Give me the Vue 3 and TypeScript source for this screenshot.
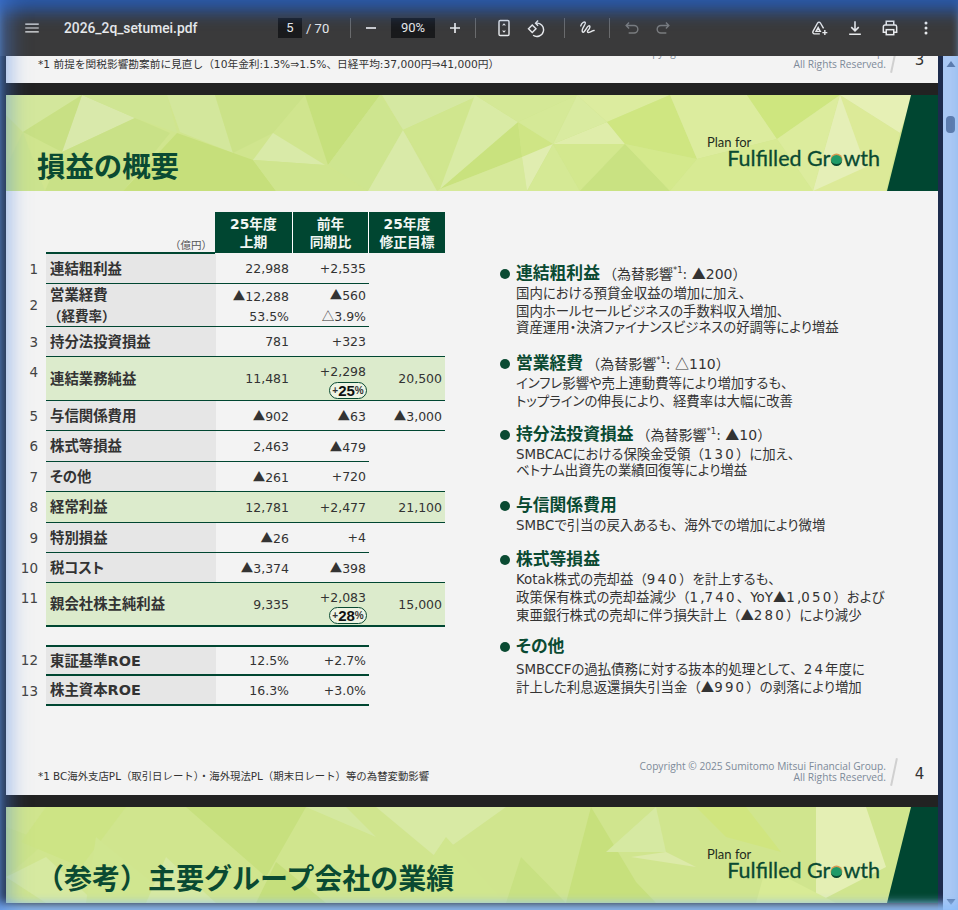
<template>
  <div class="viewer">
    <header class="toolbar">
      <div class="tb-left">
        <svg class="ic menu" viewBox="0 0 24 24"><path d="M3 6h18v1.6H3zM3 11.200h18v1.600H3zM3 16.400h18V18H3z" fill="#e8eaed" /></svg>
        <span class="filename">2026_2q_setumei.pdf</span>
      </div>
      <div class="tb-center">
        <span class="pagebox">5</span>
        <span class="pagetotal">/ 70</span>
        <i class="sep sep-a"></i>
        <svg class="ic" viewBox="0 0 24 24"><path d="M6 11h12v2H6z" fill="#e8eaed" /></svg>
        <span class="zoombox">90%</span>
        <svg class="ic" viewBox="0 0 24 24"><path d="M11 6h2v5h5v2h-5v5h-2v-5H6v-2h5z" fill="#e8eaed" /></svg>
        <i class="sep sep-b"></i>
        <svg class="ic fit" viewBox="0 0 24 24" fill="none" stroke="#e8eaed" stroke-width="1.700"><rect x="6" y="3" width="12" height="18" rx="1.500" /><path d="M12 6.500v.1M10.400 9l1.600-1.800L13.600 9M10.400 15l1.600 1.800 1.600-1.800" stroke-width="1.300" /></svg>
        <svg class="ic rotate" viewBox="0 0 24 24" fill="none" stroke="#e8eaed" stroke-width="1.700"><path d="M7.500 8.500 12 13l-4.500 4.500L3 13z" /><path d="M12 6.200a8 8 0 1 1-3.500 14.500" /><path d="M14.500 3 11.500 6.200l3 3" /></svg>
        <i class="sep"></i>
        <svg class="ic" viewBox="0 0 24 24" fill="none" stroke="#e8eaed" stroke-width="1.700" stroke-linecap="round"><path d="M4.500 9.500c1-3.500 4.500-6 5.500-4s-5.500 8-3.500 11 5-6 7.500-7 1.500 3-.5 5-1 3.500 2 2.500 4-2.500 5-2" /></svg>
        <i class="sep"></i>
        <svg class="ic dim" viewBox="0 0 24 24" fill="none" stroke="#7a7c7f" stroke-width="1.700"><path d="M8.500 5.500 5 9l3.500 3.500M5 9h9.500a4.500 4.500 0 0 1 0 9H8" /></svg>
        <svg class="ic dim" viewBox="0 0 24 24" fill="none" stroke="#7a7c7f" stroke-width="1.700"><path d="M15.500 5.500 19 9l-3.500 3.500M19 9H9.500a4.500 4.500 0 0 0 0 9H16" /></svg>
      </div>
      <div class="tb-right">
        <svg class="ic" viewBox="0 0 24 24" fill="none" stroke="#e8eaed" stroke-width="1.700"><path d="M13 19H6.500a2 2 0 0 1-1.700-3L10.300 6a2 2 0 0 1 3.400 0l3.800 6.500" /><path d="M8.500 16h5l-2.500-4.500zM19 14.500v6M16 17.500h6" /></svg>
        <svg class="ic" viewBox="0 0 24 24" fill="none" stroke="#e8eaed" stroke-width="1.900"><path d="M12 4v11M7.500 11 12 15.500 16.500 11M5 19.500h14" /></svg>
        <svg class="ic" viewBox="0 0 24 24" fill="none" stroke="#e8eaed" stroke-width="1.800"><path d="M7.500 8V4h9v4M7.500 17H4v-6.500a2 2 0 0 1 2-2h12a2 2 0 0 1 2 2V17h-3.500" /><rect x="7.500" y="14" width="9" height="6" /></svg>
        <svg class="ic" viewBox="0 0 24 24" fill="#e8eaed"><circle cx="12" cy="6" r="1.800" /><circle cx="12" cy="12" r="1.800" /><circle cx="12" cy="18" r="1.800" /></svg>
      </div>
    </header>

    <div class="body">
      <main class="pages">
        <section class="page page-prev">
          <p class="note prev-note">*1 前提を関税影響勘案前に見直し（10年金利:1.3%⇒1.5%、日経平均:37,000円⇒41,000円）</p>
          <div class="copyright prev-copy">
            <span>Copyright © 2025 Sumitomo Mitsui Financial Group.<br />All Rights Reserved.</span>
            <i class="slash"></i>
            <b class="pageno">3</b>
          </div>
        </section>

        <section class="page page-main">
          <div class="banner">
            <svg class="facets" viewBox="0 0 932 96" preserveAspectRatio="none">
              <polygon v-for="(f, i) in facets" :key="i" :points="f.p" :fill="f.c" />
            </svg>
            <h1 class="title">損益の概要</h1>
            <div class="logo">
              <span class="plan">Plan for</span>
              <span class="fulfilled">Fulfilled Gr<i class="dot-o"></i>wth</span>
            </div>
          </div>

          <div class="content">
            <div class="table">
              <div class="thead">
                <span class="unit">（億円）</span>
                <div class="th">25年度<br />上期</div>
                <div class="th">前年<br />同期比</div>
                <div class="th">25年度<br />修正目標</div>
              </div>
              <div
                v-for="row in rows"
                :key="row.no"
                class="row"
                :class="[row.kind, { spaced: row.no === '12' }]"
                :style="{ height: row.h + 'px' }"
              >
                <span class="no" :class="{ high: row.badge }">{{ row.no }}</span>
                <div class="cells" :class="{ short: row.short, thick: row.thick }">
                  <div class="label">
                    <span>{{ row.label }}</span>
                    <span v-if="row.sub" class="sublabel">（経費率）</span>
                  </div>
                  <div class="val">
                    <span><Num :v="row.a" /></span>
                    <span v-if="row.sub">{{ row.subA }}</span>
                  </div>
                  <div class="val" :class="{ withbadge: row.badge }">
                    <span><Num :v="row.b" /></span>
                    <span v-if="row.sub"><Num :v="row.subB" /></span>
                    <span v-if="row.badge" class="badge">
                      <small>+</small><b>{{ row.badge }}</b><small>%</small>
                    </span>
                  </div>
                  <div v-if="!row.short" class="val"><span><Num :v="row.c" /></span></div>
                </div>
              </div>
            </div>

            <div class="points">
              <div v-for="p in points" :key="p.head" class="point">
                <i class="bullet"></i>
                <div>
                  <div class="head">
                    <b>{{ p.head }}</b>
                    <span v-if="p.fx" class="fx"><Num v="（為替影響" /><sup>*1</sup>: <Num :v="p.fx + '）'" /></span>
                  </div>
                  <p v-for="l in p.lines" :key="l"><Num :v="l" /></p>
                </div>
              </div>
            </div>
          </div>

          <div class="foot">
            <p class="note foot-note">*1 BC海外支店PL（取引日レート）・海外現法PL（期末日レート）等の為替変動影響</p>
            <div class="copyright foot-copy">
              <span>Copyright © 2025 Sumitomo Mitsui Financial Group.<br />All Rights Reserved.</span>
              <i class="slash"></i>
              <b class="pageno">4</b>
            </div>
          </div>
        </section>

        <section class="page page-next">
          <div class="banner">
            <svg class="facets" viewBox="0 0 932 96" preserveAspectRatio="none">
              <polygon v-for="(f, i) in facets2" :key="i" :points="f.p" :fill="f.c" />
            </svg>
            <h1 class="title title-next">（参考）主要グループ会社の業績</h1>
            <div class="logo">
              <span class="plan">Plan for</span>
              <span class="fulfilled">Fulfilled Gr<i class="dot-o"></i>wth</span>
            </div>
          </div>
        </section>
      </main>

      <aside class="scrollbar">
        <svg class="arrow" viewBox="0 0 10 8"><path d="M5 1 9.500 7H.5z" fill="#5c7cae" /></svg>
        <div class="track"><div class="thumb"></div></div>
        <svg class="arrow" viewBox="0 0 10 8"><path d="M5 7 .5 1h9z" fill="#5c7cae" /></svg>
      </aside>
    </div>

    <div class="glow"></div>
  </div>
</template>

<script setup lang="ts">
import { h } from 'vue'

interface Row {
  no: string
  label: string
  a: string
  b: string
  c?: string
  h: number
  kind?: string
  short?: boolean
  thick?: boolean
  sub?: boolean
  subA?: string
  subB?: string
  badge?: string
}

// triangles and brackets stay full width in the pdf, digits run wide
const Num = (props: { v?: string }) =>
  (props.v ?? '')
    .split(/([▲△（）、]|\d+)/)
    .filter(Boolean)
    .map((t) => {
      if (/\d/.test(t)) return h('span', { class: 'dg' }, t)
      return /[▲△（）、]/.test(t) ? h('span', { class: 'sym' }, t) : t
    })
Num.props = ['v']

const rows: Row[] = [
  { no: '1', label: '連結粗利益', a: '22,988', b: '+2,535', h: 30, short: true },
  { no: '2', label: '営業経費', a: '▲12,288', b: '▲560', h: 43, short: true, sub: true, subA: '53.5%', subB: '△3.9%' },
  { no: '3', label: '持分法投資損益', a: '781', b: '+323', h: 30, c: '' },
  { no: '4', label: '連結業務純益', a: '11,481', b: '+2,298', c: '20,500', h: 44, kind: 'green', badge: '25' },
  { no: '5', label: '与信関係費用', a: '▲902', b: '▲63', c: '▲3,000', h: 30 },
  { no: '6', label: '株式等損益', a: '2,463', b: '▲479', h: 31, short: true },
  { no: '7', label: 'その他', a: '▲261', b: '+720', h: 30, c: '' },
  { no: '8', label: '経常利益', a: '12,781', b: '+2,477', c: '21,100', h: 31, kind: 'green' },
  { no: '9', label: '特別損益', a: '▲26', b: '+4', h: 30, short: true },
  { no: '10', label: '税コスト', a: '▲3,374', b: '▲398', h: 30, c: '' },
  { no: '11', label: '親会社株主純利益', a: '9,335', b: '+2,083', c: '15,000', h: 44, kind: 'green', badge: '28', thick: true },
  { no: '12', label: '東証基準ROE', a: '12.5%', b: '+2.7%', h: 31, short: true, thick: true },
  { no: '13', label: '株主資本ROE', a: '16.3%', b: '+3.0%', h: 30, short: true, thick: true },
]

const points = [
  {
    head: '連結粗利益',
    fx: '▲200',
    lines: ['国内における預貸金収益の増加に加え、', '国内ホールセールビジネスの手数料収入増加、', '資産運用・決済ファイナンスビジネスの好調等により増益'],
  },
  {
    head: '営業経費',
    fx: '△110',
    lines: ['インフレ影響や売上連動費等により増加するも、', 'トップラインの伸長により、経費率は大幅に改善'],
  },
  {
    head: '持分法投資損益',
    fx: '▲10',
    lines: ['SMBCACにおける保険金受領（130）に加え、', 'ベトナム出資先の業績回復等により増益'],
  },
  { head: '与信関係費用', lines: ['SMBCで引当の戻入あるも、海外での増加により微増'] },
  {
    head: '株式等損益',
    lines: ['Kotak株式の売却益（940）を計上するも、', '政策保有株式の売却益減少（1,740、YoY▲1,050）および', '東亜銀行株式の売却に伴う損失計上（▲280）により減少'],
  },
  {
    head: 'その他',
    lines: ['SMBCCFの過払債務に対する抜本的処理として、24年度に', '計上した利息返還損失引当金（▲990）の剥落により増加'],
  },
]

const facets = [
  { p: '0,72 17,37 39,96 0,96', c: '#cbe38e' },
  { p: '0,0 76,0 17,37 0,20', c: '#d3e79c' },
  { p: '76,0 129,23 56,57', c: '#d9e9ab' },
  { p: '17,37 76,0 56,57', c: '#c8e084' },
  { p: '56,57 129,23 164,38 117,96 39,96', c: '#c9e187' },
  { p: '129,23 76,0 161,0 171,38', c: '#cfe593' },
  { p: '161,0 209,0 227,58 174,37', c: '#d3e79c' },
  { p: '171,38 247,65 270,96 117,96', c: '#c6df7b' },
  { p: '209,0 299,0 267,38 227,58', c: '#cbe288' },
  { p: '267,38 247,65 319,70', c: '#d9eaa8' },
  { p: '247,65 270,96 362,96 319,70', c: '#cfe58e' },
  { p: '299,0 374,0 322,70', c: '#c6e07c' },
  { p: '376,0 474,0 397,35', c: '#d5e8a2' },
  { p: '322,70 374,0 397,35 362,96', c: '#cee58f' },
  { p: '397,35 431,96 362,96', c: '#d9eaa8' },
  { p: '397,35 474,0 434,94', c: '#d0e68e' },
  { p: '434,94 512,27 516,62', c: '#c9e27e' },
  { p: '512,27 547,49 516,62', c: '#cfe585' },
  { p: '469,0 434,94 512,27', c: '#d9eba5' },
  { p: '469,0 571,0 512,27', c: '#d4e896' },
  { p: '434,94 516,62 521,96 431,96', c: '#d6e99a' },
  { p: '516,62 547,49 521,96', c: '#e0edb0' },
  { p: '547,49 574,96 521,96', c: '#d5e995' },
  { p: '547,49 619,49 574,96', c: '#d3e88e' },
  { p: '619,49 574,96 664,96', c: '#c9e282' },
  { p: '547,49 601,27 619,49', c: '#dfedaa' },
  { p: '571,0 601,27 547,49', c: '#d9eba0' },
  { p: '512,27 571,0 547,49', c: '#d5e997' },
  { p: '571,0 664,0 601,27', c: '#dcec9f' },
  { p: '601,27 664,0 691,64 619,49', c: '#cfe681' },
  { p: '619,49 691,64 664,96', c: '#d4e98c' },
  { p: '664,0 741,0 771,44 691,64', c: '#dcec9e' },
  { p: '741,0 834,0 771,44', c: '#cee67f' },
  { p: '691,64 771,44 807,96 664,96', c: '#d7ea93' },
  { p: '834,0 807,96 771,44', c: '#dcec9d' },
  { p: '834,0 894,38 880,96 807,96', c: '#dcea98' },
  { p: '834,0 807,96 860,72', c: '#e5efb7' },
  { p: '834,0 907,0 894,38', c: '#e6f0b5' },
]

const facets2 = [
  { p: '0,20 40,35 0,70', c: '#cde489' },
  { p: '40,0 120,0 75,60 15,35', c: '#cde485' },
  { p: '0,70 40,96 90,96 40,50', c: '#d6e9a0' },
  { p: '90,30 140,70 170,96 80,96', c: '#d0e690' },
  { p: '180,0 300,0 260,70', c: '#c7e07e' },
  { p: '160,50 210,96 140,96', c: '#d6e9a2' },
  { p: '300,0 370,30 340,0', c: '#d4e8a0' },
  { p: '270,55 320,96 250,96', c: '#c5df7c' },
  { p: '370,0 500,0 430,50', c: '#d8eaa4' },
  { p: '440,30 500,96 395,96', c: '#d0e68e' },
  { p: '515,50 560,96 500,96', c: '#c8e182' },
  { p: '585,0 630,75 650,96 560,96', c: '#c7e07c' },
  { p: '600,45 660,45 650,0', c: '#d6e9a2' },
  { p: '625,50 660,45 690,60', c: '#dceaa9' },
  { p: '690,0 740,0 775,45 720,30', c: '#d0e57f' },
  { p: '810,0 860,0 880,60 810,96', c: '#e4efb4' },
  { p: '760,60 830,96 750,96', c: '#d8eb95' },
]
</script>

<style>
html,
body {
  margin: 0;
  background: #222;
  overflow: hidden;
}

.sym {
  font-family: 'Noto Sans CJK JP', sans-serif;
  font-feature-settings: normal;
}

.point p .dg {
  letter-spacing: 2.2px;
}
</style>

<style scoped>
.viewer {
  position: relative;
  width: 958px;
  height: 910px;
  overflow: hidden;
  display: flex;
  flex-direction: column;
  background: #222;
  font-family: 'DejaVu Sans', 'Noto Sans CJK JP', sans-serif;
  color: #333;
}

/* toolbar */
.toolbar {
  height: 56px;
  flex: none;
  display: flex;
  align-items: center;
  justify-content: space-between;
  background: #3a3a3b;
  color: #e8eaed;
  font-family: Roboto, sans-serif;
  font-size: 13px;
  position: relative;
  z-index: 2;
}

.tb-left {
  display: flex;
  align-items: center;
  padding-left: 23px;
  width: 278px;
  box-sizing: border-box;
}

.filename {
  margin-left: 23px;
  font-weight: 500;
  font-size: 13.800px;
}

.tb-center {
  display: flex;
  align-items: center;
  flex: 1;
}

.ic {
  width: 20px;
  height: 20px;
  flex: none;
}

.pagebox,
.zoombox {
  background: #191a1c;
  height: 20px;
  line-height: 20px;
  text-align: center;
}

.pagebox {
  width: 24px;
}

.pagetotal {
  margin-left: 4px;
  width: 37px;
}

.zoombox {
  width: 44px;
  margin: 0 10px;
}

.sep {
  width: 1px;
  height: 20px;
  background: #6a6b6d;
  margin: 0 12px;
  flex: none;
}

.sep-a {
  margin: 0 10px 0 7px;
}

.sep-b {
  margin: 0 18px 0 10px;
}

.fit {
  margin-right: 12px;
}

.rotate {
  margin-right: 6px;
}

.dim + .dim {
  margin-left: 11px;
}

.tb-right {
  display: flex;
  align-items: center;
  gap: 15.700px;
  padding-right: 22px;
}

.menu {
  width: 18px;
  height: 18px;
}

/* pages */
.body {
  flex: 1;
  display: flex;
  min-height: 0;
}

.pages {
  width: 943px;
  padding: 0 5px 0 6px;
  box-sizing: border-box;
  display: flex;
  flex-direction: column;
  gap: 12px;
  background: linear-gradient(90deg, #222 938px, #1c2b4d 938px);
}

.page {
  background: #f3f3f3;
  flex: none;
}

.page-prev {
  height: 27px;
  position: relative;
  display: flex;
  justify-content: space-between;
}

.note {
  margin: 0;
  color: #333;
}

.prev-note {
  padding: 1px 0 0 32px;
  line-height: 15px;
  font-size: 10.700px;
}

.copyright {
  display: flex;
  align-items: center;
  font-size: 10.200px;
  line-height: 11.500px;
  color: #7d8a99;
  text-align: right;
  font-family: 'Open Sans', sans-serif;
}

.prev-copy {
  height: 27px;
  margin-top: -11px;
}

.foot-copy {
  height: 40px;
}

.slash {
  width: 2px;
  height: 28px;
  background: #d0d0d0;
  transform: rotate(12deg);
  margin-left: 7px;
}

.pageno {
  font-weight: 400;
  font-size: 15px;
  color: #333;
  width: 43px;
  text-align: center;
  padding: 5px 0 0 6px;
  box-sizing: border-box;
  font-family: 'DejaVu Sans', sans-serif;
}

.page-main {
  height: 700px;
  display: flex;
  flex-direction: column;
}

.banner {
  position: relative;
  height: 96px;
  flex: none;
  overflow: hidden;
  background: #d0e58e;
  display: flex;
  align-items: flex-end;
  justify-content: space-between;
}

.facets {
  position: absolute;
  inset: 0;
  width: 100%;
  height: 100%;
}

.banner::after {
  content: '';
  position: absolute;
  right: 0;
  top: 0;
  bottom: 0;
  width: 51px;
  background: #004631;
  clip-path: polygon(24px 0, 100% 0, 100% 100%, 0 100%);
}

.title {
  position: relative;
  margin: 0 0 10px 31px;
  font-family: 'Noto Sans CJK JP', sans-serif;
  font-weight: 700;
  font-size: 28.400px;
  line-height: 32px;
  color: #0a4a32;
}

.title-next {
  margin-left: 30px;
  font-size: 28px;
}

.logo {
  position: relative;
  z-index: 1;
  display: flex;
  flex-direction: column;
  margin: 0 58px 23px 0;
  font-family: Lato, sans-serif;
  width: 174px;
}

.plan {
  font-size: 13px;
  line-height: 12px;
  color: #1e2c20;
  padding-left: 1px;
}

.fulfilled {
  font-size: 21.500px;
  line-height: 20px;
  color: #0a4a32;
  -webkit-text-stroke: 0.3px #0a4a32;
  text-align: right;
  white-space: nowrap;
}

.dot-o {
  display: inline-block;
  box-sizing: border-box;
  width: 11px;
  height: 11px;
  margin: 0 1px;
  border-radius: 50%;
  background: #1f9a68;
  border-bottom: 2px solid #0a4a32;
  box-shadow: 0 -1px 0 0.500px #d99a52;
}

.content {
  flex: 1;
  display: flex;
  min-height: 0;
}

/* table */
.table {
  width: 439px;
  padding: 21px 0 0 14px;
  flex: none;
  box-sizing: content-box;
  font-size: 12.500px;
}

.thead {
  display: grid;
  grid-template-columns: 169px 77px 76px 77px;
  margin-left: 26px;
  height: 42px;
  width: 399px;
}

.unit {
  align-self: end;
  text-align: right;
  font-size: 10.500px;
  color: #555;
  padding-right: 3px;
  border-bottom: 2px solid #004631;
  font-family: 'Noto Sans CJK JP', sans-serif;
}

.th {
  background: #004631;
  color: #f2f6f3;
  font-size: 13.800px;
  font-weight: 700;
  line-height: 18px;
  text-align: center;
  padding-top: 3px;
  height: 41px;
  box-sizing: border-box;
  border-left: 1px solid #fff;
}

.th:nth-child(2) {
  border-left: 0;
}

.row {
  display: flex;
  align-items: stretch;
}

.row.spaced {
  margin-top: 18px;
}

.no {
  width: 26px;
  padding-right: 8px;
  box-sizing: border-box;
  text-align: right;
  align-self: center;
  color: #444;
  flex: none;
  font-size: 13.500px;
  margin-top: -1px;
}

.no.high {
  align-self: flex-start;
  padding-top: 8px;
}

.cells {
  display: grid;
  grid-template-columns: 170px 76px 77px 76px;
  flex: 1;
  border-bottom: 1.500px solid #004631;
  box-sizing: border-box;
  max-width: 399px;
}

.cells.short {
  grid-template-columns: 170px 76px 77px;
  max-width: 323px;
}

.cells.thick {
  border-bottom-width: 2px;
}

.spaced .cells {
  border-top: 2px solid #004631;
}

.green .cells {
  background: #dcebcc;
}

.label {
  background: #e6e6e6;
  font-weight: 700;
  font-size: 14.400px;
  font-feature-settings: 'palt';
  padding-left: 4px;
  display: flex;
  flex-direction: column;
  justify-content: space-around;
  color: #333;
  line-height: 18px;
}

.sublabel {
  font-size: 13.500px;
  font-feature-settings: normal;
  margin-left: -2px;
}

.green .label {
  background: transparent;
}

.val {
  display: flex;
  flex-direction: column;
  justify-content: space-around;
  align-items: flex-end;
  padding-right: 3px;
  white-space: nowrap;
  position: relative;
}

.val.withbadge {
  justify-content: flex-start;
  padding-top: 6px;
  line-height: 18px;
}

.badge {
  position: absolute;
  right: 2px;
  bottom: 1px;
  width: 38px;
  height: 17px;
  box-sizing: border-box;
  border: 1px solid #0a4a32;
  border-radius: 9px;
  display: flex;
  align-items: center;
  justify-content: center;
  background: #eef4e4;
  font-family: 'Liberation Sans', sans-serif;
  color: #111;
  line-height: 1;
}

.badge b {
  font-size: 15px;
}

.badge small {
  font-size: 10px;
  font-weight: 700;
  color: #333;
}

/* right column */
.points {
  padding-top: 73px;
  margin-left: 41px;
  font-size: 13.400px;
  line-height: 18.200px;
  font-feature-settings: 'palt';
  flex: 1;
  display: flex;
  flex-direction: column;
  gap: 16px;
}

.point {
  display: flex;
  gap: 6px;
}

.point:last-child {
  margin-top: -2.500px;
}

.point:last-child .head {
  margin-bottom: 3px;
}

.bullet {
  width: 10px;
  height: 10px;
  border-radius: 50%;
  background: #0a4a32;
  margin-top: 5px;
  flex: none;
}

.head {
  height: 19px;
  line-height: 19px;
  white-space: nowrap;
}

.head b {
  font-size: 16.800px;
  color: #0a4a32;
}

.fx {
  font-size: 14px;
  margin-left: 3px;
  color: #333;
}

.fx sup {
  font-size: 8.500px;
  line-height: 0;
}

.point p {
  margin: 0;
  height: 18.200px;
  white-space: nowrap;
  color: #333;
}

.foot {
  height: 43px;
  flex: none;
  display: flex;
  justify-content: space-between;
  align-items: flex-start;
}

.foot-note {
  padding: 16px 0 0 32px;
  font-size: 10.400px;
}

.page-next {
  height: 96px;
}

/* scrollbar */
.scrollbar {
  width: 15px;
  flex: none;
  background: #a9c8f4;
  display: flex;
  flex-direction: column;
  align-items: center;
}

.arrow {
  width: 10px;
  height: 8px;
  flex: none;
  margin: 4px 0;
}

.track {
  flex: 1;
  width: 100%;
  padding-top: 44px;
  box-sizing: border-box;
}

.thumb {
  width: 9px;
  height: 17px;
  margin: 0 auto;
  border-radius: 4px;
  background: #5c7cae;
}

/* window edge glow over the whole page */
.glow {
  position: absolute;
  inset: 0;
  pointer-events: none;
  z-index: 3;
  box-shadow: inset 22px 0 22px -14px rgba(70, 130, 230, 0.55), inset 0 24px 16px -12px rgba(40, 90, 175, 0.9), inset 0 -10px 10px -3px rgba(150, 195, 250, 0.95);
}
</style>
